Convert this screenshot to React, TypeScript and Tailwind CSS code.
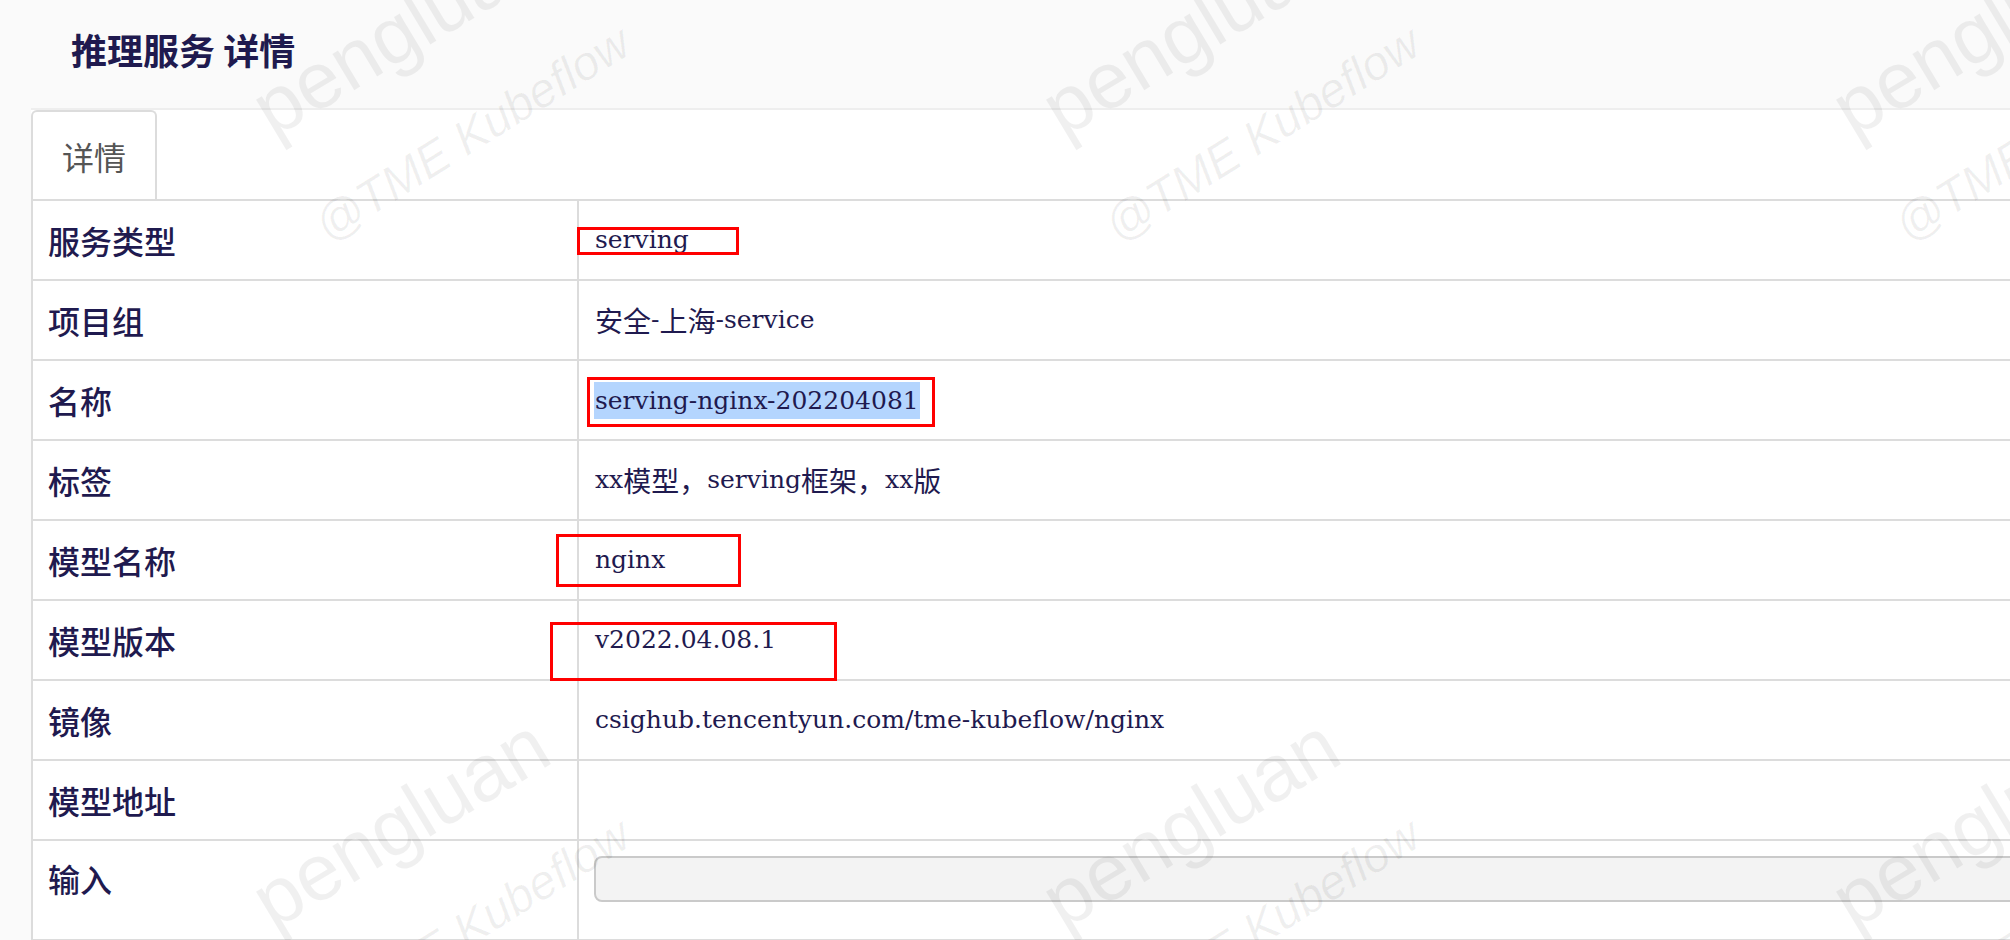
import { Fragment } from 'react';

type DetailRow = {
  readonly label: string;
  readonly value: string;
  readonly selected?: boolean;
};

const rows: DetailRow[] = [
  { label: '服务类型', value: 'serving' },
  { label: '项目组', value: '安全-上海-service' },
  { label: '名称', value: 'serving-nginx-202204081', selected: true },
  { label: '标签', value: 'xx模型，serving框架，xx版' },
  { label: '模型名称', value: 'nginx' },
  { label: '模型版本', value: 'v2022.04.08.1' },
  { label: '镜像', value: 'csighub.tencentyun.com/tme-kubeflow/nginx' },
  { label: '模型地址', value: '' },
];

// 标注用的红框（截图上的人工标记）
const marks = [
  { key: 'type', className: 'left-[577px] top-[227px] w-[162px] h-[28px]' },
  { key: 'name', className: 'left-[587px] top-[377px] w-[348px] h-[50px]' },
  { key: 'model', className: 'left-[556px] top-[534px] w-[185px] h-[53px]' },
  { key: 'version', className: 'left-[550px] top-[622px] w-[287px] h-[59px]' },
];

const watermarkX = [280, 1070, 1860];
const watermarkY = [150, 942];

const CJK = /([\u3000-\u303f\u4e00-\u9fff\uff00-\uffef]+)/;

// 中文和拉丁文分开设置字体与字号
function MixedText({ text }: { text: string }) {
  return (
    <>
      {text.split(CJK).filter(Boolean).map((part, i) =>
        CJK.test(part) ? (
          <span key={i} className="text-[28px] [font-family:'Noto_Sans_CJK_SC',sans-serif]">
            {part}
          </span>
        ) : (
          <span key={i} className="text-[25px] [font-family:'DejaVu_Serif',serif]">
            {part}
          </span>
        )
      )}
    </>
  );
}

function Watermarks() {
  return (
    <div className="pointer-events-none absolute inset-0 z-10 overflow-hidden text-black/[0.06] [font-family:'Liberation_Sans',sans-serif]">
      {watermarkY.map((y) =>
        watermarkX.map((x) => (
          <Fragment key={`${x}-${y}`}>
            <span
              className="absolute origin-bottom-left -rotate-[31deg] whitespace-nowrap text-[80px] leading-none"
              style={{ left: x, top: y - 80 }}
            >
              pengluan
            </span>
            <span
              className="absolute origin-bottom-left -rotate-[32deg] whitespace-nowrap text-[48px] italic leading-none"
              style={{ left: x + 52, top: y + 100 - 48 }}
            >
              @TME Kubeflow
            </span>
          </Fragment>
        ))
      )}
    </div>
  );
}

export default function App() {
  return (
    <div className="relative h-screen overflow-hidden bg-[#fafafa] text-[#1f1a4f]">
      {/* 页面标题 */}
      <header className="flex h-[108px] items-center pb-[11px] pl-[71px]">
        <h1 className="text-[36px] font-bold leading-none [font-family:'Noto_Sans_CJK_SC',sans-serif]">
          推理服务 详情
        </h1>
      </header>

      <div className="ml-[31px] w-[2100px] border-t-2 border-[#eeeeee] bg-white">
        {/* 标签页 */}
        <div className="flex h-[91px] border-b-2 border-[#dcdcdc]">
          <div className="flex h-[89px] w-[126px] items-center justify-center rounded-t-[6px] border-x-2 border-t-2 border-[#dcdcdc] text-[32px] text-[#555555] [font-family:'Noto_Sans_CJK_SC',sans-serif]">
            详情
          </div>
        </div>

        {/* 详情表格 */}
        <div className="border-l-2 border-[#dcdcdc]">
          {rows.map((row) => (
            <div key={row.label} className="flex h-[80px] border-b-2 border-[#dcdcdc]">
              <div className="flex w-[546px] shrink-0 items-center border-r-2 border-[#dcdcdc] pl-[15px] text-[32px] font-medium [font-family:'Noto_Sans_CJK_SC',sans-serif]">
                {row.label}
              </div>
              <div className="flex flex-1 items-center pl-[16px] whitespace-nowrap">
                {row.selected ? (
                  <span className="ml-[-1px] inline-block h-[37px] bg-[#b4d5fe] pl-[1px] pr-[1px] leading-[37px]">
                    <MixedText text={row.value} />
                  </span>
                ) : (
                  <MixedText text={row.value} />
                )}
              </div>
            </div>
          ))}

          {/* 输入 */}
          <div className="flex h-[100px] border-b-2 border-[#dcdcdc]">
            <div className="w-[546px] shrink-0 border-r-2 border-[#dcdcdc] pl-[15px] pt-[21px] text-[32px] font-medium leading-[32px] [font-family:'Noto_Sans_CJK_SC',sans-serif]">
              输入
            </div>
            <div className="flex-1 pl-[15px] pt-[15px]">
              <div className="h-[46px] w-full rounded-[8px] border-2 border-[#cacaca] bg-[#f3f3f3]" />
            </div>
          </div>
        </div>
      </div>

      <Watermarks />

      {marks.map((m) => (
        <div
          key={m.key}
          className={`pointer-events-none absolute z-20 border-[3px] border-[#ff0000] ${m.className}`}
        />
      ))}
    </div>
  );
}
